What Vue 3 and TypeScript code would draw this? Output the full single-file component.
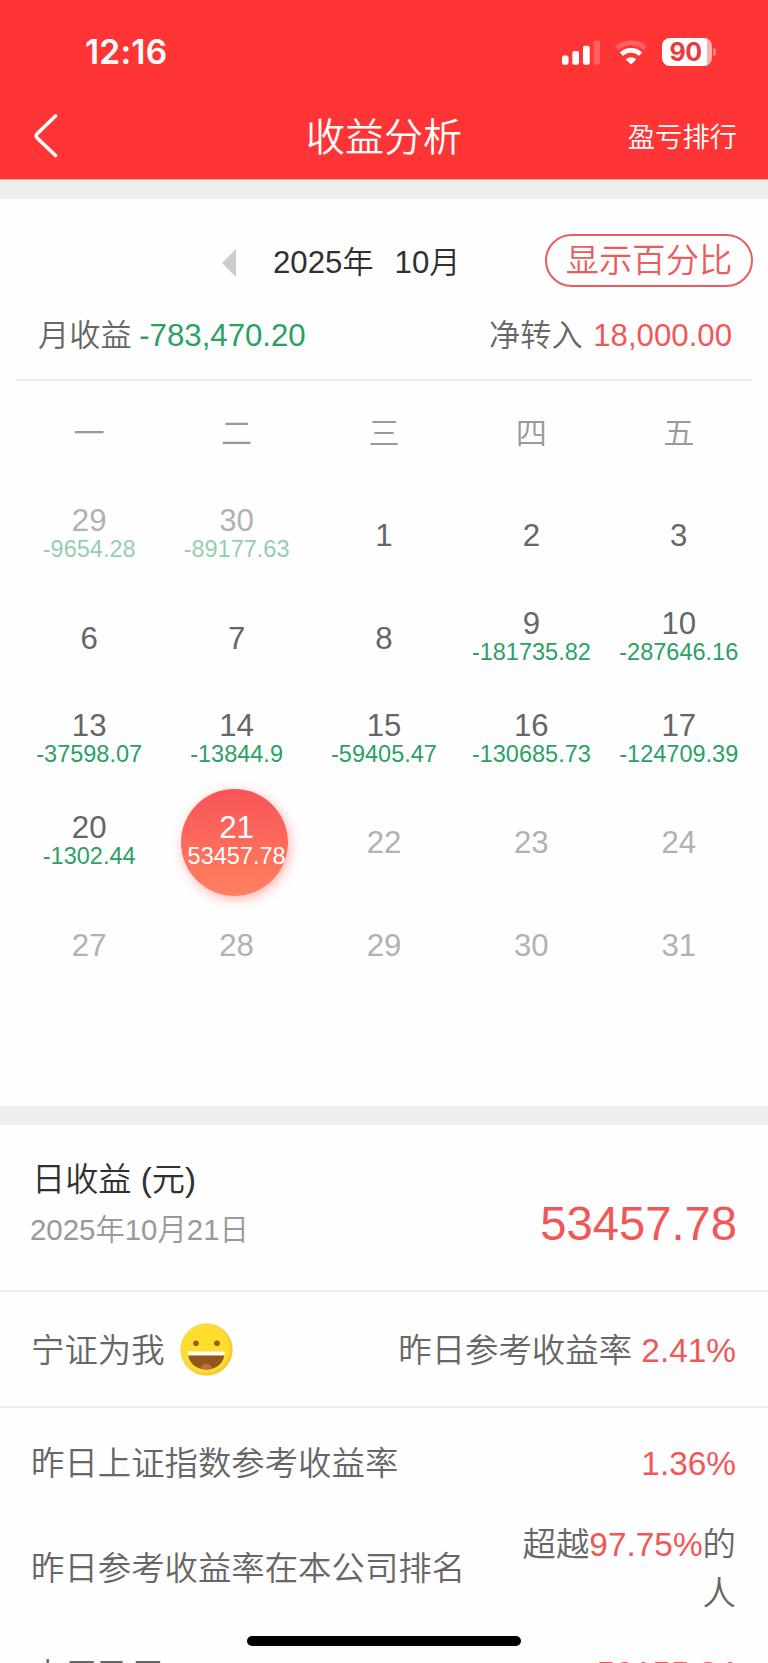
<script setup lang="ts">
interface Day {
  day: number
  amount?: string
  state?: 'muted' | 'active'
}

const weekdays: string[] = ['一', '二', '三', '四', '五']

const days: Day[] = [
  { day: 29, amount: '-9654.28', state: 'muted' },
  { day: 30, amount: '-89177.63', state: 'muted' },
  { day: 1 },
  { day: 2 },
  { day: 3 },
  { day: 6 },
  { day: 7 },
  { day: 8 },
  { day: 9, amount: '-181735.82' },
  { day: 10, amount: '-287646.16' },
  { day: 13, amount: '-37598.07' },
  { day: 14, amount: '-13844.9' },
  { day: 15, amount: '-59405.47' },
  { day: 16, amount: '-130685.73' },
  { day: 17, amount: '-124709.39' },
  { day: 20, amount: '-1302.44' },
  { day: 21, amount: '53457.78', state: 'active' },
  { day: 22, state: 'muted' },
  { day: 23, state: 'muted' },
  { day: 24, state: 'muted' },
  { day: 27, state: 'muted' },
  { day: 28, state: 'muted' },
  { day: 29, state: 'muted' },
  { day: 30, state: 'muted' },
  { day: 31, state: 'muted' },
]
</script>

<template>
  <div class="page">
    <header class="header">
      <div class="status">
        <span class="time">12:16</span>
        <div class="indicators">
          <svg class="signal" viewBox="0 0 38 25" aria-hidden="true">
            <rect x="0" y="15.5" width="6.5" height="9.3" rx="2" />
            <rect x="10.3" y="11" width="6.7" height="13.8" rx="2" />
            <rect x="21" y="5.7" width="6.7" height="19.1" rx="2" />
            <rect x="31.5" y="0.5" width="6.5" height="24.3" rx="2" opacity="0.22" />
          </svg>
          <svg class="wifi" viewBox="0 0 34 25" aria-hidden="true">
            <path d="M2.7 8.2C10.7 0.9 23.3 0.9 31.3 8.2" class="arc faint" />
            <path d="M7.5 14.2C12.8 9.1 21.2 9.1 26.5 14.2" class="arc" />
            <path d="M17 24.6L11.8 19.5C14.7 16.6 19.3 16.6 22.2 19.5Z" />
          </svg>
          <div class="battery">
            <span class="cell">90</span>
            <i class="nub"></i>
          </div>
        </div>
      </div>
      <nav class="nav">
        <svg class="back" viewBox="0 0 26 46" aria-hidden="true">
          <path d="M21.5 3L3.4 20.4Q1.2 22.8 3.4 25.2L21.5 42.5" />
        </svg>
        <h1 class="title">收益分析</h1>
        <span class="rank">盈亏排行</span>
      </nav>
    </header>

    <section class="calendar">
      <div class="month">
        <svg class="prev" viewBox="0 0 14 28" aria-hidden="true"><path d="M14 0V28L0 14Z" /></svg>
        <span class="year">2025年</span>
        <span>10月</span>
        <button class="toggle" type="button">显示百分比</button>
      </div>
      <div class="summary">
        <span>月收益 <b class="down">-783,470.20</b></span>
        <span>净转入 <b class="up transfer">18,000.00</b></span>
      </div>
      <div class="weekdays">
        <span v-for="name in weekdays" :key="name">{{ name }}</span>
      </div>
      <div class="days">
        <div v-for="(item, i) in days" :key="i" class="day" :class="item.state">
          <span class="num">{{ item.day }}</span>
          <span v-if="item.amount" class="amount">{{ item.amount }}</span>
        </div>
      </div>
    </section>

    <section class="daily">
      <div>
        <h2 class="daily-title">日收益 (元)</h2>
        <p class="date">2025年10月21日</p>
      </div>
      <strong class="total">53457.78</strong>
    </section>

    <section class="mood">
      <div class="who">
        <span>宁证为我</span>
        <svg class="face" viewBox="0 0 53 53" aria-hidden="true">
          <defs>
            <linearGradient id="rim" x1="0" y1="0" x2="1" y2="1">
              <stop offset="0" stop-color="#f8e060" />
              <stop offset="1" stop-color="#f3c920" />
            </linearGradient>
          </defs>
          <circle cx="26.5" cy="26.5" r="26.2" fill="url(#rim)" />
          <circle cx="26" cy="26" r="23.8" fill="#fddd2d" />
          <circle cx="16" cy="20.3" r="2.8" fill="#9b5c10" />
          <circle cx="37" cy="20.3" r="2.8" fill="#9b5c10" />
          <path d="M8 28.5H44.5V32.5H8Z" fill="#fff" />
          <path d="M8.3 32.5H44.3C43 41 35.5 46.5 26.3 46.5S9.6 41 8.3 32.5Z" fill="#915619" />
          <path d="M20.3 45.4C21 42.2 23.3 40.7 26.3 40.7S31.6 42.2 32.3 45.4Q26.3 47.5 20.3 45.4Z" fill="#bd6c47" />
        </svg>
      </div>
      <span>昨日参考收益率 <b class="up">2.41%</b></span>
    </section>

    <section class="stats">
      <div class="stat index">
        <span>昨日上证指数参考收益率</span>
        <b class="up">1.36%</b>
      </div>
      <div class="stat ranking">
        <span>昨日参考收益率在本公司排名</span>
        <span class="beat">超越<b class="up">97.75%</b>的人</span>
      </div>
      <div class="stat week">
        <span>本周盈亏</span>
        <b class="up">52155.34</b>
      </div>
    </section>

    <div class="home"></div>
  </div>
</template>

<style>
body {
  margin: 0;
  background: #fefefe;
}
</style>

<style scoped>
.page {
  position: relative;
  width: 768px;
  height: 1663px;
  overflow: hidden;
  box-sizing: border-box;
  background: #fefefe;
  color: #666;
  font-family: 'Liberation Sans', 'Noto Sans CJK SC', sans-serif;
  font-size: 33.4px;
  font-weight: 350;
  line-height: 49px;
  white-space: nowrap;
}
.page * {
  box-sizing: border-box;
}
b,
strong {
  font-weight: 400;
}
.page .up {
  color: #f05858;
}
.down {
  color: #2ba065;
}
.header {
  height: 180px;
  background: #ff3434;
  border-bottom: 1px solid #f7a0a0;
  color: #fff;
}
.status {
  height: 98px;
  padding: 6px 52px 0 85px;
  display: flex;
  align-items: center;
  justify-content: space-between;
}
.time {
  font-family: Inter, sans-serif;
  font-size: 33.5px;
  font-weight: 600;
  letter-spacing: 0.2px;
}
.indicators {
  display: flex;
  align-items: center;
}
.indicators svg {
  fill: #fff;
}
.signal {
  width: 38px;
  height: 25px;
}
.wifi {
  width: 34px;
  height: 25px;
  margin: 0 14px 0 14px;
}
.wifi .arc {
  fill: none;
  stroke: #fff;
  stroke-width: 4.8;
}
.wifi .faint {
  opacity: 0.22;
}
.battery {
  display: flex;
  align-items: center;
  gap: 1.5px;
  margin-top: -1px;
}
.cell {
  width: 50px;
  height: 28px;
  padding-right: 2px;
  border-radius: 8px;
  background: linear-gradient(90deg, #fff 90%, #ffaeae 90%);
  color: #e83c3c;
  font-family: Inter, sans-serif;
  font-size: 25px;
  font-weight: 700;
  line-height: 28px;
  letter-spacing: -0.5px;
  text-align: center;
}
.nub {
  width: 3px;
  height: 8px;
  border-radius: 0 4px 4px 0;
  background: #ff8585;
}
.nav {
  height: 79px;
  padding: 0 31px 0 34px;
  display: grid;
  grid-template-columns: 235px 1fr 235px;
  align-items: center;
}
.back {
  width: 26px;
  height: 46px;
  margin-top: -4px;
  fill: none;
  stroke: #fff;
  stroke-width: 3.6;
  stroke-linecap: round;
}
.title {
  margin: 0 3px 0 0;
  font-size: 39px;
  font-weight: 350;
  text-align: center;
}
.rank {
  justify-self: end;
  font-size: 27.3px;
}
.calendar {
  height: 945px;
  border-top: 19px solid #eee;
  border-bottom: 19px solid #eee;
  font-size: 31.2px;
}
.month {
  height: 124px;
  padding: 3px 15px 0 222px;
  display: flex;
  align-items: center;
  color: #303030;
}
.prev {
  width: 14px;
  height: 28px;
  margin-right: 37px;
  fill: #ccc;
}
.year {
  margin-right: 21px;
}
.toggle {
  width: 208px;
  height: 53px;
  margin: -5px 0 0 auto;
  padding: 0;
  border: 2px solid #eb5c5c;
  border-radius: 27px;
  background: none;
  color: #eb5c5c;
  font-family: inherit;
  font-size: 33.3px;
  font-weight: 350;
  line-height: 49px;
}
.summary {
  height: 58px;
  margin: 0 16px;
  padding: 0 20px 0 22px;
  display: flex;
  justify-content: space-between;
  border-bottom: 2px solid #eee;
  line-height: 25px;
}
.summary .down {
  margin-left: -1px;
}
.transfer {
  margin-left: 2px;
}
.weekdays,
.days {
  display: grid;
  grid-template-columns: repeat(5, 147.4px);
  padding: 0 15.5px;
  text-align: center;
}
.weekdays {
  height: 104px;
  align-items: center;
  color: #999;
}
.days {
  grid-auto-rows: 102.4px;
}
.day {
  display: flex;
  flex-direction: column;
  align-items: center;
  justify-content: center;
  position: relative;
}
.num {
  line-height: 30px;
}
.amount {
  margin-bottom: 3px;
  font-size: 23.5px;
  line-height: 27px;
  color: #2ba065;
}
.muted {
  opacity: 0.5;
}
.active {
  color: #fff;
  z-index: 0;
}
.active .amount {
  color: #fff;
}
.active::before {
  content: '';
  position: absolute;
  z-index: -1;
  top: -3px;
  left: 18.5px;
  width: 107px;
  height: 107px;
  border-radius: 50%;
  background: linear-gradient(#f95458, #ff8060);
  box-shadow: 2px 3px 12px rgba(255, 90, 80, 0.45);
}
.daily {
  height: 167px;
  padding: 30px 31px 0 30px;
  display: flex;
  justify-content: space-between;
  border-bottom: 2px solid #eee;
}
.daily-title {
  margin: 0 0 0 2px;
  color: #303030;
  font-size: 33.2px;
  font-weight: 350;
}
.date {
  margin: 1px 0 0;
  color: #999;
  font-size: 29.4px;
}
.total {
  margin-top: 44px;
  color: #f05858;
  font-size: 47.2px;
}
.mood {
  height: 116px;
  padding: 0 32px 0 31px;
  display: flex;
  align-items: center;
  justify-content: space-between;
  border-bottom: 2px solid #eee;
}
.mood span {
  padding-top: 2px;
}
.who {
  display: flex;
  align-items: center;
  gap: 15.5px;
}
.face {
  width: 53px;
  height: 53px;
}
.stat {
  padding: 0 32px 0 31px;
  display: flex;
  align-items: center;
  justify-content: space-between;
}
.index {
  height: 110px;
}
.ranking {
  height: 101px;
}
.week {
  height: 113px;
}
.week .up {
  margin-top: -5px;
}
.beat {
  width: 215px;
  white-space: normal;
  text-align: right;
}
.home {
  position: absolute;
  top: 1636px;
  left: 247px;
  width: 274px;
  height: 10px;
  border-radius: 5px;
  background: #000;
}
</style>
